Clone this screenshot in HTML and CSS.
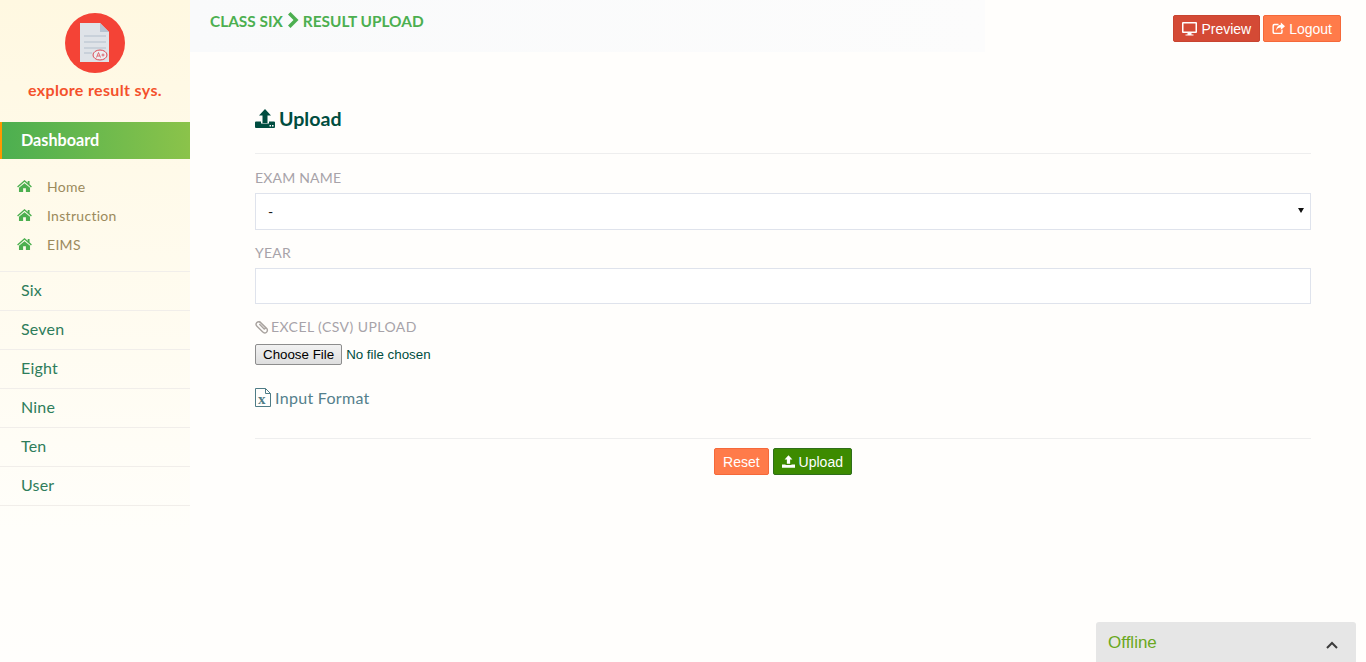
FILE: index.html
```html
<!DOCTYPE html>
<html lang="en">
<head>
<meta charset="utf-8">
<title>Result Upload</title>
<link rel="stylesheet" href="styles.css">
</head>
<body>
<div class="app">
  <aside class="sidebar">
    <div class="brand">
      <div class="logo">
        <svg viewBox="0 0 60 60" width="60" height="60">
          <circle cx="30" cy="30" r="30" fill="#f44336"/>
          <path d="M15 10H35L44 19V49H15Z" fill="#dfe3e8"/>
          <path d="M35 10L44 19H35Z" fill="#b7c4d2"/>
          <path d="M19 23H41M19 29H41M19 35H41M19 40H27" stroke="#b4c0cc" stroke-width="1.2"/>
          <ellipse cx="35" cy="42" rx="7" ry="5" fill="#eceef1" stroke="#dc4a55" stroke-width="1"/>
          <path d="M31.500 44.500L33.500 39.500L35.500 44.500M32.300 43H34.700M36.500 42H39.500M38 40.500V43.500" fill="none" stroke="#dc4a55" stroke-width=".8"/>
        </svg>
      </div>
      <div class="brand-name">explore result sys.</div>
    </div>
    <div class="dash">Dashboard</div>
    <ul class="sublinks">
      <li><svg class="home" viewBox="0 0 16 13"><path d="M8 0L11.500 3V1H13.500V4.700L16 7L15 8L8 2L1 8L0 7ZM8 3.500L14 8.500V13H9.500V9H6.500V13H2V8.500Z"/></svg>Home</li>
      <li><svg class="home" viewBox="0 0 16 13"><path d="M8 0L11.500 3V1H13.500V4.700L16 7L15 8L8 2L1 8L0 7ZM8 3.500L14 8.500V13H9.500V9H6.500V13H2V8.500Z"/></svg>Instruction</li>
      <li><svg class="home" viewBox="0 0 16 13"><path d="M8 0L11.500 3V1H13.500V4.700L16 7L15 8L8 2L1 8L0 7ZM8 3.500L14 8.500V13H9.500V9H6.500V13H2V8.500Z"/></svg>EIMS</li>
    </ul>
    <ul class="classes">
      <li>Six</li>
      <li>Seven</li>
      <li>Eight</li>
      <li>Nine</li>
      <li>Ten</li>
      <li>User</li>
    </ul>
  </aside>
  <main class="main">
    <header class="topbar">
      <div class="crumb">CLASS SIX
        <svg class="chev" viewBox="0 0 12 16" width="12" height="16"><path d="M1 2.500L3.500 0L11.500 8L3.500 16L1 13.500L6.500 8Z"/></svg>
        RESULT UPLOAD</div>
      <div class="top-actions">
        <a class="btn btn-red"><svg viewBox="0 0 15 14" width="15" height="14"><path fill-rule="evenodd" d="M1 0H14Q15 0 15 1V10Q15 11 14 11H9.500V12.500H11.500V13.500H3.500V12.500H5.500V11H1Q0 11 0 10V1Q0 0 1 0ZM1.500 1.500V9.500H13.500V1.500Z"/></svg>Preview</a>
        <a class="btn btn-orange"><svg viewBox="0 0 14 13" width="13" height="13"><path d="M2.500 1.500H7V3H3Q2 3 2 4V10Q2 11 3 11H9Q10 11 10 10V8.500L11.500 7.500V10.500Q11.500 12.500 9.500 12.500H2.500Q.5 12.500 .5 10.500V3.500Q.5 1.500 2.500 1.500Z"/><path d="M9.500 0L14 4L9.500 8V5.500C7 5.500 5.500 6.500 4.500 9C4.500 5.500 6.500 2.800 9.500 2.500Z"/></svg>Logout</a>
      </div>
    </header>
    <section class="content">
      <h1 class="title"><svg viewBox="0 0 20 19" width="20" height="19"><path d="M10 0L16 6.500H12.500V14H7.500V6.500H4Z"/><path fill-rule="evenodd" d="M1 12.500H6V14.500H14V12.500H19Q20 12.500 20 13.500V18Q20 19 19 19H1Q0 19 0 18V13.500Q0 12.500 1 12.500ZM14.500 16V17.500H16V16ZM17 16V17.500H18.500V16Z"/></svg>Upload</h1>
      <form class="form">
        <div class="field">
          <label class="lbl" for="exam">EXAM NAME</label>
          <div class="select-wrap"><select class="control select" id="exam"><option>-</option></select></div>
        </div>
        <div class="field">
          <label class="lbl lbl-year" for="year">YEAR</label>
          <input class="control input" id="year" type="text">
        </div>
        <div class="field">
          <label class="lbl lbl-file" for="csv"><svg viewBox="0 0 13 14" width="14" height="15"><path d="M4 2L10.500 8.500C12 10 11.500 11.500 10.700 12.300C9.700 13.200 8.200 13.200 7 12L1.800 6.800C.7 5.700 .8 4.200 1.700 3.200C2.700 2.300 4 2.300 5 3.300L9.500 7.800C10.200 8.500 9 9.700 8.300 9L4 4.700" fill="none" stroke="#a9a39f" stroke-width="1.300"/></svg>EXCEL (CSV) UPLOAD</label>
          <input class="file" id="csv" type="file">
        </div>
        <div class="format"><svg viewBox="0 0 16 19" width="16" height="19"><path d="M.5 .5H10.500L15.500 5.500V18.500H.5Z" fill="none" stroke="#4f7c86"/><path d="M10.500 .5V5.500H15.500" fill="none" stroke="#4f7c86"/><text x="3" y="15.500" class="xmark">x</text></svg>Input Format</div>
        <div class="actions">
          <a class="btn btn-orange">Reset</a>
          <a class="btn btn-green"><svg viewBox="0 0 20 19" width="13" height="13"><path d="M10 0L16 6.500H12.500V13H7.500V6.500H4Z"/><path d="M0 14H5.500V15H14.500V14H20V19H0Z"/></svg>Upload</a>
        </div>
      </form>
    </section>
  </main>
</div>
<div class="chat">
  <span>Offline</span>
  <svg viewBox="0 0 12 8" width="12" height="8"><path d="M1 7L6 2L11 7" fill="none" stroke="#3c3c3c" stroke-width="2"/></svg>
</div>
</body>
</html>
```
FILE: styles.css
```css
* { box-sizing: border-box; }
html, body { margin: 0; height: 100%; }
body {
  overflow: hidden;
  background: #fffefc;
  font-family: "Lato", "Open Sans", sans-serif;
}
ul { list-style: none; margin: 0; padding: 0; }
.app { display: flex; height: 662px; }

.sidebar {
  flex: 0 0 190px;
  background: linear-gradient(180deg, #fff8e1 0%, #fffefa 80%, #fffefc 100%);
}
.brand { height: 122px; padding-top: 13px; text-align: center; }
.logo { height: 60px; }
.logo svg { display: block; margin: 0 0 0 65px; }
.brand-name {
  margin-top: 6px;
  color: #f4512c;
  font-size: 16px;
  font-weight: 700;
  line-height: 22px;
  letter-spacing: .35px;
}
.dash {
  height: 37px;
  padding-left: 19px;
  border-left: 2px solid #ff9800;
  background: linear-gradient(90deg, #4caf50, #8bc34a);
  color: #fff;
  font-size: 16.200px;
  font-weight: 700;
  line-height: 35px;
}
.sublinks { padding: 13px 0 12px 17px; border-bottom: 1px solid #f1eeea; }
.sublinks li {
  display: flex;
  align-items: center;
  height: 29px;
  color: #9b8a5c;
  font-size: 14px;
  letter-spacing: .3px;
}
.home { width: 15px; height: 12px; margin-right: 15px; margin-top: -2px; fill: #4caf50; }
.classes li {
  height: 39px;
  padding-left: 21px;
  border-bottom: 1px solid #f1eeea;
  color: #2e7d5b;
  font-size: 16px;
  line-height: 35px;
  letter-spacing: .2px;
}

.main { flex: 1; min-width: 0; display: flex; flex-direction: column; }
.topbar {
  display: flex;
  justify-content: space-between;
  height: 52px;
  padding: 0 25px 0 20px;
  background: linear-gradient(90deg, #f9fafb 0%, #fcfcfc 67.600%, #fffefc 67.600%);
}
.crumb {
  display: flex;
  align-items: center;
  gap: 4px;
  height: 42px;
  color: #4caf50;
  font-size: 15.400px;
  font-weight: 700;
}
.chev { fill: #4caf50; margin-top: -2px; }
.top-actions { display: flex; gap: 3px; padding-top: 15px; }

.btn {
  display: inline-flex;
  align-items: center;
  gap: 4px;
  height: 27px;
  padding: 0 8px;
  border: 1px solid transparent;
  border-radius: 2px;
  color: #fff;
  font-family: "Liberation Sans", sans-serif;
  font-size: 14px;
  white-space: nowrap;
}
.btn svg { fill: #fff; }
.btn-red { background: #d44a35; border-color: #c94430; }
.btn-orange { background: #ff7b4a; border-color: #f5693a; }
.btn-green { background: #3d8b00; border-color: #2f6f1a; }

.content { padding: 0 55px 0 65px; }
.title {
  display: flex;
  align-items: center;
  gap: 4px;
  height: 102px;
  margin: 0;
  padding-top: 32px;
  border-bottom: 1px solid #eeeeee;
  color: #004d40;
  font-size: 19.600px;
  font-weight: 700;
}
.title svg { fill: #004d40; }
.lbl {
  display: block;
  height: 39px;
  padding-top: 15px;
  color: #a7a3a9;
  font-size: 14px;
  line-height: 18px;
  letter-spacing: .2px;
}
.control {
  display: block;
  width: 100%;
  border: 1px solid #dfe3ec;
  border-radius: 0;
  outline: 0;
  background: #fff;
  color: #111;
  font-family: "Lato", sans-serif;
  font-size: 14px;
}
.select-wrap { position: relative; }
.select-wrap::after {
  content: "";
  position: absolute;
  top: 15px;
  right: 7px;
  border-left: 3px solid transparent;
  border-right: 3px solid transparent;
  border-top: 5px solid #111;
}
.select { height: 37px; padding-left: 12px; appearance: none; }
.input { height: 36px; padding: 0 12px; }
.lbl-year { height: 38px; padding-top: 14px; }
.lbl-file {
  display: flex;
  align-items: center;
  gap: 2px;
  height: 40px;
  padding-top: 5px;
  letter-spacing: .42px;
}
.file {
  display: block;
  height: 21px;
  color: #004d40;
  font-family: "Liberation Sans", sans-serif;
  font-size: 13.330px;
}
.file::file-selector-button {
  height: 21px;
  margin-right: 4px;
  padding: 0 7px;
  border: 1px solid #8d8d8d;
  border-radius: 2px;
  background: linear-gradient(#f2f2f2, #dedede);
  color: #000;
  font: inherit;
}
.format {
  display: flex;
  align-items: center;
  gap: 4px;
  height: 24px;
  margin-top: 20px;
  color: #54808c;
  font-size: 16px;
  letter-spacing: .3px;
}
.xmark { fill: #4f7c86; font-family: "Liberation Serif", serif; font-size: 15px; font-weight: 700; }
.actions {
  display: flex;
  justify-content: center;
  gap: 4px;
  height: 37px;
  margin-top: 29px;
  padding-top: 9px;
  border-top: 1px solid #eeeeee;
}

.chat {
  position: fixed;
  right: 10px;
  bottom: 0;
  display: flex;
  align-items: center;
  justify-content: space-between;
  width: 260px;
  height: 40px;
  padding: 2px 18px 0 12px;
  border-radius: 3px 3px 0 0;
  background: #e6e6e6;
  color: #6aa820;
  font-family: "Liberation Sans", sans-serif;
  font-size: 17px;
}
.chat svg { margin-top: 4px; }
```
